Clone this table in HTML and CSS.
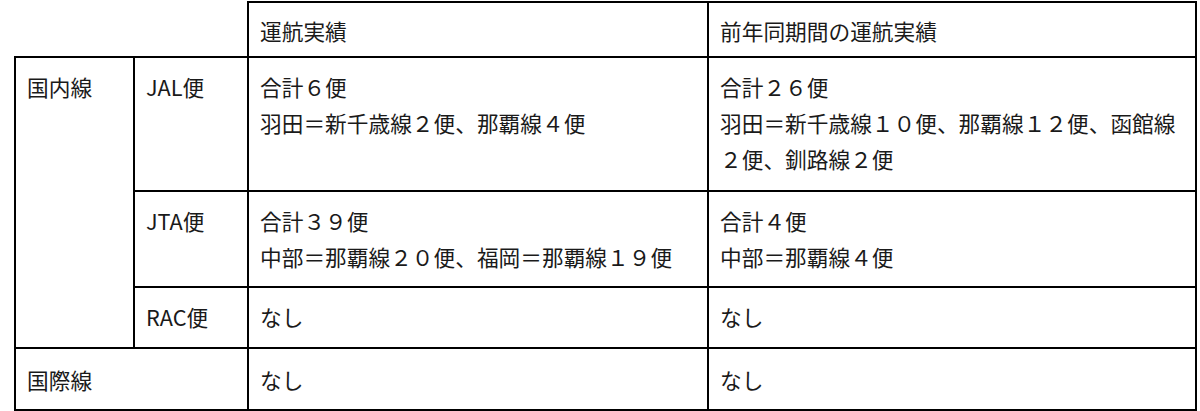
FILE: index.html
```html
<!DOCTYPE html>
<html lang="ja">
<head>
<meta charset="utf-8">
<title>運航実績</title>
<link rel="stylesheet" href="styles.css">
</head>
<body>
<table class="results">
  <colgroup>
    <col class="c1">
    <col class="c2">
    <col class="c3">
    <col class="c4">
  </colgroup>
  <tr class="r-head">
    <td class="blank" colspan="2"></td>
    <td>運航実績</td>
    <td>前年同期間の運航実績</td>
  </tr>
  <tr class="r-jal">
    <td rowspan="3">国内線</td>
    <td>JAL便</td>
    <td>合計６便<br>羽田＝新千歳線２便、那覇線４便</td>
    <td>合計２６便<br>羽田＝新千歳線１０便、那覇線１２便、函館線２便、釧路線２便</td>
  </tr>
  <tr class="r-jta">
    <td>JTA便</td>
    <td>合計３９便<br>中部＝那覇線２０便、福岡＝那覇線１９便</td>
    <td>合計４便<br>中部＝那覇線４便</td>
  </tr>
  <tr class="r-rac">
    <td>RAC便</td>
    <td>なし</td>
    <td>なし</td>
  </tr>
  <tr class="r-intl">
    <td colspan="2">国際線</td>
    <td>なし</td>
    <td>なし</td>
  </tr>
</table>
</body>
</html>
```
FILE: styles.css
```css
html, body {
  margin: 0;
  padding: 0;
  background: #ffffff;
}

body {
  font-family: "Noto Sans CJK JP", "Noto Sans", sans-serif;
  font-size: 21.7px;
  line-height: 36px;
  color: #1a1a1a;
}

.results {
  margin: 1px 0 0 14px;
  width: 1183px;
  border-collapse: collapse;
  table-layout: fixed;
}

.c1 { width: 119px; }
.c2 { width: 114px; }
.c3 { width: 460px; }
.c4 { width: 488px; }

.results td {
  box-sizing: border-box;
  border: 2px solid #000000;
  padding: 11px 10px 0 11px;
  vertical-align: top;
  text-align: left;
}

.results td.blank {
  border-top: none;
  border-left: none;
}

.r-head { height: 55px; }
.r-head td { padding-top: 10px; }
.r-jal { height: 134px; }
.r-jta { height: 96px; }
.r-rac { height: 61px; }
.r-intl { height: 62px; }
.r-intl td { padding-top: 13px; }
```
